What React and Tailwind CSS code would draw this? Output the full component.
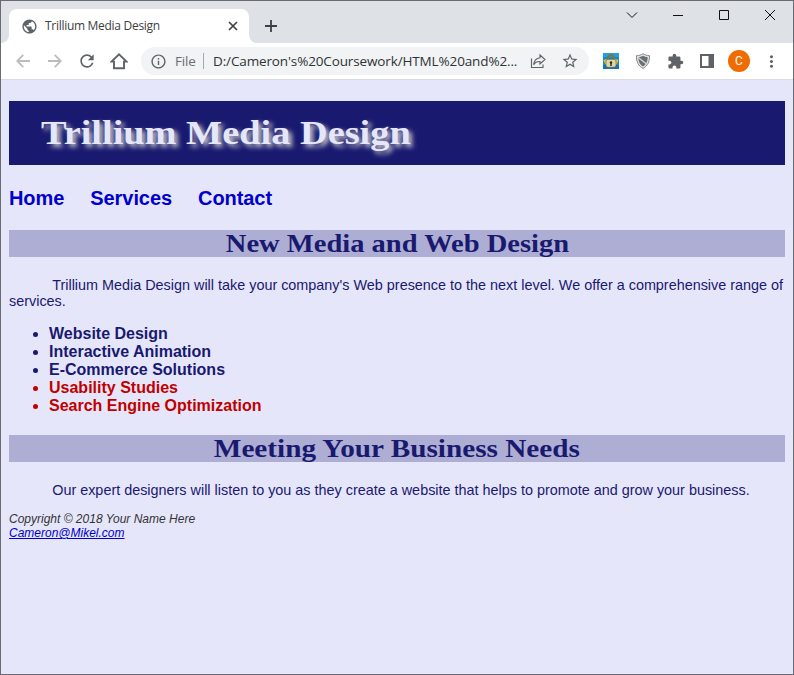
import React from "react";
import { MdPublic, MdRefresh, MdExtension, MdStarBorder, MdInfoOutline, MdMoreVert } from "react-icons/md";

const Cell = ({ children }) => (
  <span className="flex h-9 w-8 shrink-0 items-center justify-center text-[#5f6368]">{children}</span>
);

const Arrow = ({ flip }) => (
  <svg viewBox="0 0 14 14" className={flip ? "h-3.5 w-3.5 rotate-180" : "h-3.5 w-3.5"} fill="none" stroke="#babcbe" strokeWidth="1.8">
    <path d="M14 7H1.5M7.3 .9L1.2 7l6.1 6.1" />
  </svg>
);

const WindowButton = ({ children }) => (
  <span className="flex h-[27px] w-[46px] items-center justify-center">
    <svg width="12" height="12" viewBox="0 0 12 12" fill="none" stroke="#111" strokeWidth="1">
      {children}
    </svg>
  </span>
);

function TabStrip() {
  return (
    <div className="flex h-[42px] bg-[#dee1e6]">
      <div className="flex w-2 items-end">
        <svg width="8" height="8" viewBox="0 0 8 8"><path d="M8 0v8H0a8 8 0 0 0 8-8z" fill="#fff" /></svg>
      </div>
      <div className="mt-2 flex w-60 items-center rounded-t-lg bg-white pl-[11.5px]">
        <MdPublic className="h-[17px] w-[17px] text-[#5f6368]" />
        <span className="ml-[7.5px] w-[182px] whitespace-nowrap font-['Open_Sans',sans-serif] text-[12px] leading-4 tracking-[-0.29px] text-[#3c4043]">
          Trillium Media Design
        </span>
        <svg width="12" height="12" viewBox="0 0 12 12" fill="none" stroke="#3c4043" strokeWidth="1.7"><path d="M2 2l8 8M10 2l-8 8" /></svg>
      </div>
      <div className="flex w-2 items-end">
        <svg width="8" height="8" viewBox="0 0 8 8"><path d="M0 0v8h8a8 8 0 0 1-8-8z" fill="#fff" /></svg>
      </div>
      <svg className="ml-[7px] mt-[18px]" width="14" height="14" viewBox="0 0 14 14" stroke="#3c4043" strokeWidth="1.8"><path d="M7 1v12M1 7h12" /></svg>
      <div className="ml-auto flex">
        <WindowButton><path d="M1 3.500l5 5 5-5" /></WindowButton>
        <WindowButton><path d="M1 6.500h10" /></WindowButton>
        <WindowButton><path d="M1.500 1.500h9v9h-9z" /></WindowButton>
        <WindowButton><path d="M1 1l10 10M11 1L1 11" /></WindowButton>
      </div>
    </div>
  );
}

function Toolbar() {
  return (
    <div className="flex h-[37px] items-start border-b border-[#d9dbe0] bg-white pl-1.5 font-['Open_Sans',sans-serif]">
      <Cell><Arrow /></Cell>
      <Cell><Arrow flip /></Cell>
      <Cell><MdRefresh className="h-5 w-5" /></Cell>
      <Cell>
        <svg width="18" height="18" viewBox="0 0 18 18" fill="none" stroke="#5f6368" strokeWidth="1.9"><path d="M1.500 9.600H4V16.200h10V9.600h2.500L9 2.300z" /></svg>
      </Cell>
      <div className="ml-1.5 mt-1 flex h-7 w-[448px] items-center rounded-full bg-[#f1f3f4] text-[14px] leading-5">
        <MdInfoOutline className="ml-[9px] h-[17px] w-[17px] text-[#5f6368]" />
        <span className="ml-2 w-7 text-[13.5px] tracking-[-0.2px] text-[#6a6e72]">File</span>
        <span className="h-4 w-px bg-[#a4a7ab]" />
        <span className="ml-[9px] w-[309px] whitespace-nowrap text-[13.5px] tracking-[-0.13px] text-[#303336]">
          D:/Cameron's%20Coursework/HTML%20and%2...
        </span>
        <Cell>
          <svg width="16" height="16" viewBox="0 0 16 16" fill="none" stroke="#5f6368" strokeWidth="1.15"><path d="M1.500 5.500v9h11.500v-3M10 2l5 4.500-5 4.500V8.500C7 8.400 5 9.500 3.700 11.700 4 8 6.300 5.200 10 4.700z" /></svg>
        </Cell>
        <Cell><MdStarBorder className="h-[18px] w-[18px]" /></Cell>
      </div>
      <div className="ml-1.5 flex">
        <Cell>
          <svg width="16" height="16" viewBox="0 0 16 16">
            <path d="M0 0h16v16H0z" fill="#1688cf" />
            <path d="M0 0h16v4H0z" fill="#20a0df" />
            <path d="M0 12h16v4H0z" fill="#1672b8" />
            <path d="M.5 7l3.500-1v6L2 11zM15.500 7L12 6v6l2-1z" fill="#e3c832" />
            <path d="M5 8V5.200a3 3 0 0 1 6 0V8" fill="none" stroke="#7d7448" strokeWidth="2" />
            <rect x="3" y="6.300" width="10" height="8" rx="2" fill="#e0d5a6" stroke="#62572d" strokeWidth=".6" />
            <path d="M8 8.300a1.300 1.300 0 0 1 .7 2.400V13H7.300v-2.300A1.300 1.300 0 0 1 8 8.300z" fill="#2f2815" />
          </svg>
        </Cell>
        <Cell>
          <svg width="16" height="16" viewBox="0 0 16 16">
            <path d="M8 .7c2 1.300 4 1.900 6.500 2C14.700 9 12.500 13 8 15.400 3.500 13 1.300 9 1.500 2.700 4 2.600 6 2 8 .7z" fill="#e6e6e6" stroke="#858789" />
            <path d="M8 2.700c1.500.9 3 1.300 4.800 1.500C12.700 8.700 11 11.700 8 13.500 5 11.700 3.300 8.700 3.200 4.200 5 4 6.500 3.600 8 2.700z" fill="#6c6f72" />
            <path d="M3.200 4.500l9 7" stroke="#d5d6d7" strokeWidth="1.300" />
          </svg>
        </Cell>
        <Cell><MdExtension className="h-[17px] w-[17px]" /></Cell>
        <Cell>
          <svg width="14" height="14" viewBox="0 0 14 14"><path fillRule="evenodd" d="M0 0h14v14H0zM2 2v10h6.500V2z" fill="#5f6368" /></svg>
        </Cell>
        <Cell>
          <span className="flex h-[22px] w-[22px] items-center justify-center rounded-full bg-[#ef6c00] font-[Roboto,sans-serif] text-[12px] leading-none text-white">C</span>
        </Cell>
        <Cell><MdMoreVert className="h-[19px] w-[19px]" /></Cell>
      </div>
    </div>
  );
}

const services = [
  { name: "Website Design" },
  { name: "Interactive Animation" },
  { name: "E-Commerce Solutions" },
  { name: "Usability Studies", hot: true },
  { name: "Search Engine Optimization", hot: true },
];

const Heading = ({ children, className }) => (
  <h2 className="h-[27px] bg-[#aeaed4] text-center font-['Liberation_Serif',serif] text-[26px] font-bold leading-[27px] text-[#191970]">
    <span className={className}>{children}</span>
  </h2>
);

function Page() {
  return (
    <main className="flex-1 bg-[#e6e6fa] px-2 pt-[21px] font-['Liberation_Sans',sans-serif] text-[#191970]">
      <h1 className="h-16 bg-[#191970] pl-8 font-['Liberation_Serif',serif] text-[34px] font-bold leading-[64px] text-[#e6e6fa]">
        <span className="inline-block origin-left scale-x-[1.127] whitespace-nowrap [text-shadow:3px_3px_5px_#ccc]">Trillium Media Design</span>
      </h1>
      <nav className="mt-[21px] flex gap-[26px] text-[20px] font-bold leading-6 tracking-[-0.07px] text-[#0000cd]">
        <a>Home</a>
        <a>Services</a>
        <a>Contact</a>
      </nav>
      <div className="mt-5">
        <Heading className="inline-block scale-x-[1.097] whitespace-nowrap">New Media and Web Design</Heading>
      </div>
      <p className="mt-5 indent-[43.2px] text-[14.4px] leading-4">
        Trillium Media Design will take your company's Web presence to the next level. We offer a comprehensive range of services.
      </p>
      <ul className="mt-4 list-disc pl-10 text-[16px] font-bold leading-[18px]">
        {services.map((s) => (
          <li key={s.name} className={s.hot ? "text-[#c00000]" : ""}>{s.name}</li>
        ))}
      </ul>
      <div className="mt-5">
        <Heading className="inline-block scale-x-[1.124] whitespace-nowrap">Meeting Your Business Needs</Heading>
      </div>
      <p className="mt-5 indent-[43.2px] text-[14.4px] leading-4">
        Our expert designers will listen to you as they create a website that helps to promote and grow your business.
      </p>
      <footer className="mt-3.5 text-[12px] italic leading-[14px] text-[#333]">
        Copyright © 2018 Your Name Here
        <br />
        <a className="text-[#0000cd] underline">Cameron@Mikel.com</a>
      </footer>
    </main>
  );
}

export default function App() {
  return (
    <div className="flex h-[675px] w-[794px] flex-col overflow-hidden border border-[#6b6b75]">
      <TabStrip />
      <Toolbar />
      <Page />
    </div>
  );
}
